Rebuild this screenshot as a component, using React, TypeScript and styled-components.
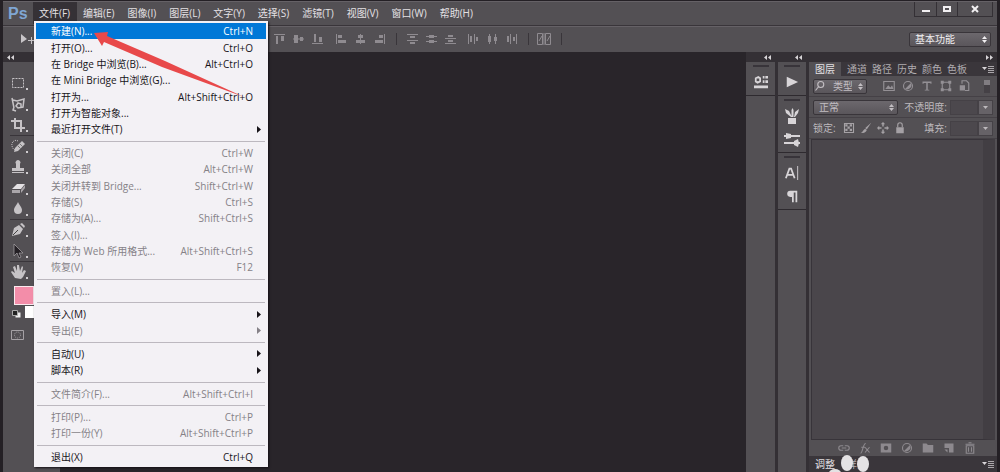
import React from "react";
import styled, { createGlobalStyle, css } from "styled-components";

const C = {
  bar: "#535054",
  line: "#39353a",
  light: "#656166",
  canvas: "#29252a",
  dark: "#3a363b",
  text: "#d8d5d8",
};

const Global = createGlobalStyle`
  * { box-sizing: border-box; }
  body { margin: 0; background: ${C.canvas}; overflow: hidden; }
  body, button, select, input {
    font-family: "Open Sans", "Noto Sans CJK SC", sans-serif;
    font-size: 10px;
    line-height: 14px;
  }
  button { border: 0; padding: 0; background: none; color: inherit; text-align: left; }
  svg { display: block; flex: none; }
`;

const Frame = styled.div`
  position: relative;
  display: flex;
  flex-direction: column;
  height: 100vh;
  border: solid #242025;
  border-width: 1px 3px 0;
  color: ${C.text};
`;

const MenuBar = styled.header`
  display: flex;
  align-items: center;
  height: 24px;
  flex: none;
  background: ${C.bar};
  border-top: 1px solid ${C.light};
`;

const Logo = styled.span`
  width: 30px;
  padding-left: 5px;
  font: 700 16px/22px "Liberation Sans", sans-serif;
  color: #7fa6d3;
`;

const Menus = styled.nav`
  display: flex;
  flex: 1;
  align-self: flex-start;
`;

const MenuTitle = styled.button<{ $open?: boolean }>`
  height: 22px;
  padding: 0 7px 0 6px;
  white-space: nowrap;
  background: ${(p) => (p.$open ? "#353136" : "transparent")};
  color: #e4e1e4;
`;

const WindowButtons = styled.div`
  display: flex;
  align-self: flex-start;
  height: 15px;
  margin-right: 4px;
  border: 1px solid #343035;
  border-top: 0;
`;

const WindowButton = styled.button<{ $wide?: boolean }>`
  display: grid;
  place-items: center;
  width: ${(p) => (p.$wide ? 35 : 21)}px;
  color: #f2f0f2;
  & + & { border-left: 1px solid #343035; }
`;

const OptionsBar = styled.div`
  display: flex;
  align-items: center;
  height: 27px;
  flex: none;
  padding: 0 6px 0 16px;
  background: ${C.bar};
  border-top: 1px solid ${C.line};
  box-shadow: inset 0 1px ${C.light};
`;

const AlignTools = styled.div`
  display: flex;
  flex: 1;
  padding-left: 239px;
`;

const AlignGroup = styled.div<{ $gap?: number; $line?: boolean }>`
  display: flex;
  gap: 7px;
  margin-right: ${(p) => p.$gap ?? 0}px;
  padding-right: 10px;
  border-right: 1px solid ${(p) => (p.$line ? C.line : "transparent")};
`;

const Choice = styled.span<{ $width: number; $bright?: boolean }>`
  display: flex;
  align-items: center;
  width: ${(p) => p.$width}px;
  height: 15px;
  border: 1px solid ${C.line};
  border-radius: 2px;
  background: linear-gradient(#6c686d, #5a565b);
  color: ${(p) => (p.$bright ? "#f2f0f2" : "#c2bec2")};
  select {
    appearance: none;
    flex: 1;
    min-width: 0;
    height: 13px;
    padding: 0 5px;
    border: 0;
    background: none;
    color: inherit;
    line-height: 13px;
  }
  svg { margin-right: 2px; pointer-events: none; }
`;

const Workspace = styled.main`
  display: flex;
  flex: 1;
  min-height: 0;
`;

const ToolColumn = styled.aside`
  display: flex;
  flex-direction: column;
  width: 57px;
  flex: none;
  background: ${C.bar};
`;

const Strip = styled.div<{ $end?: boolean }>`
  display: flex;
  align-items: center;
  justify-content: ${(p) => (p.$end ? "flex-end" : "flex-start")};
  height: 10px;
  flex: none;
  padding: 0 4px;
  background: #343035;
`;

const Tools = styled.div`
  display: flex;
  flex-direction: column;
  padding: 10px 0 0 7px;
`;

const Tool = styled.button<{ $rule?: boolean }>`
  display: flex;
  width: 24px;
  height: 21px;
  align-items: center;
  color: #c6c3c6;
  border-top: 1px solid ${(p) => (p.$rule ? C.line : "transparent")};
`;

const Swatches = styled.div`
  display: flex;
  flex-wrap: wrap;
  justify-content: flex-end;
  gap: 1px;
  width: 31px;
  padding-top: 4px;
`;

const Foreground = styled.button`
  width: 20px;
  height: 19px;
  border: 1px solid #fbe9ee;
  background: #f38da9;
`;

const Background = styled.button`
  width: 9px;
  height: 12px;
  background: #fff;
`;

const ResetColors = styled.button`
  margin-right: 2px;
`;

const QuickMask = styled.button`
  margin: 10px 0 0 8px;
`;

const Document = styled.section`
  flex: 1;
  background: ${C.canvas};
`;

const Dock = styled.aside<{ $width: number }>`
  display: flex;
  flex-direction: column;
  width: ${(p) => p.$width}px;
  flex: none;
  background: ${C.bar};
  border-right: 3px solid #343035;
`;

const DockGroup = styled.div`
  display: flex;
  flex-direction: column;
  align-items: center;
  gap: 6px;
  padding: 3px 0 5px;
  border-bottom: 1px solid #2e2a2f;
  color: #d8d5d8;
`;

const Grip = styled.i`
  width: 16px;
  height: 2px;
  background: #38343a;
`;

const DockButton = styled.button`
  display: grid;
  place-items: center;
  width: 20px;
  height: 17px;
`;

const Panels = styled.aside`
  display: flex;
  flex-direction: column;
  width: 188px;
  flex: none;
  background: ${C.bar};
`;

const Tabs = styled.div<{ $collapsed?: boolean }>`
  display: flex;
  align-items: center;
  height: ${(p) => (p.$collapsed ? 16 : 14)}px;
  flex: none;
  padding-right: 2px;
  background: ${C.dark};
`;

const Tab = styled.button<{ $active?: boolean; $flat?: boolean }>`
  height: 14px;
  line-height: 13px;
  padding: 0 ${(p) => (p.$active ? 6 : 3)}px;
  margin-right: ${(p) => (p.$active ? 3 : -1)}px;
  color: ${(p) => (p.$active ? "#e4e1e4" : "#b0acb0")};
  background: ${(p) => (p.$active && !p.$flat ? C.bar : "transparent")};
`;

const PanelMenu = styled.button`
  margin-left: auto;
  color: #aaa6aa;
`;

const PanelRow = styled.div`
  display: flex;
  align-items: center;
  height: 21px;
  flex: none;
  padding: 0 4px;
  color: #bdb9bd;
  border-bottom: 1px solid #454146;
`;

const Filters = styled.div`
  display: flex;
  flex: 1;
  gap: 7px;
  padding: 0 3px 0 16px;
  color: #949095;
`;

const FilterSwitch = styled.button`
  width: 6px;
  height: 13px;
  margin-left: auto;
  border-top: 5px solid #817d82;
  background: #454146;
`;

const Locks = styled.div`
  display: flex;
  gap: 5px;
  margin-left: 7px;
  color: #a5a1a5;
`;

const NumberField = styled.label`
  display: flex;
  align-items: center;
  gap: 3px;
  margin-left: auto;
  white-space: nowrap;
  input {
    width: 28px;
    height: 15px;
    padding: 0 2px;
    border: 1px solid #454146;
    background: #4c484d;
    color: inherit;
  }
  button {
    display: grid;
    place-items: center;
    width: 15px;
    height: 15px;
    margin-left: -3px;
    background: #666267;
    border: 1px solid #454146;
  }
`;

const LayerList = styled.div`
  flex: 1;
  min-height: 0;
  margin: 0 2px;
  border: 1px solid #38343a;
  border-right: 12px solid #423e43;
  background: #4a464b;
`;

const LayerActions = styled.div`
  display: flex;
  align-items: center;
  gap: 9px;
  height: 16px;
  flex: none;
  padding-left: 29px;
  color: #8d898e;
`;

const Menu = styled.ul`
  position: absolute;
  top: 20px;
  left: 31px;
  display: flex;
  flex-direction: column;
  width: 234px;
  height: 446px;
  margin: 0;
  padding: 2px;
  list-style: none;
  background: #f3f1f5;
  box-shadow: 1px 1px 2px #141015;
`;

const MenuItem = styled.li`
  display: flex;
  flex: 1 1 16px;
  min-height: 0;
`;

const MenuAction = styled.button<{ $selected?: boolean }>`
  display: flex;
  flex: 1;
  align-items: center;
  justify-content: space-between;
  padding: 0 13px 0 15px;
  color: #171419;
  white-space: nowrap;
  &:disabled { color: #858187; }
  ${(p) => p.$selected && css`background: #0078d7; color: #fff;`}
`;

const Submenu = styled.svg`
  margin-right: -8px;
`;

const Rule = styled.li`
  height: 7px;
  flex: none;
  padding: 3px 1px;
  &::after { content: ""; display: block; height: 1px; background: #bcb8bf; }
`;

const Pointer = styled.svg`
  position: absolute;
  top: 30px;
  left: 90px;
  pointer-events: none;
`;

const Paw = styled.svg`
  position: absolute;
  right: 122px;
  bottom: 0;
`;

const Updown = () => (
  <svg width="7" height="9" viewBox="0 0 7 9" fill="currentColor">
    <path d="M3.5 1 6 4H1zM3.5 8 1 5h5z" />
  </svg>
);

const Chevrons = ({ right }: { right?: boolean }) => (
  <svg width="7" height="5" viewBox="0 0 7 5" fill="#d8d5d8">
    <path d={right ? "M0 0 3 2.5 0 5zM4 0 7 2.5 4 5z" : "M3 0 0 2.5 3 5zM7 0 4 2.5 7 5z"} />
  </svg>
);

const MenuLines = () => (
  <svg width="13" height="8" viewBox="0 0 13 8" fill="currentColor">
    <path d="M0 2h5L2.5 5z" fill="#d8d5d8" />
    <path d="M6 1h6v1H6zM6 3h6v1H6zM6 5h6v1H6zM6 7h6v1H6z" />
  </svg>
);

const alignPaths: Record<string, string> = {
  top: "M0 0h11v1H0zM2 2h2v8H2zM7 2h3v5H7z",
  middle: "M0 4.5h11v1H0zM1 1h4v8H1zM7 3h3v4H7z",
  bottom: "M0 9h11v1H0zM2 0h2v8H2zM7 3h3v5H7z",
  left: "M0 0h1v10H0zM2 1h4v3H2zM2 6h8v3H2z",
  center: "M5 0h1v10H5zM3 1h5v3H3zM1 6h9v3H1z",
  right: "M10 0h1v10h-1zM5 1h4v3H5zM1 6h8v3H1z",
  distTop: "M0 0h11v1H0zM3 2h5v2H3zM0 6h11v1H0zM3 8h5v2H3z",
  distMid: "M0 2h11v1H0zM3 1h5v3H3zM0 7h11v1H0zM3 6h5v3H3z",
  distBot: "M0 4h11v1H0zM3 1h5v2H3zM0 9h11v1H0zM3 6h5v2H3z",
  distLeft: "M0 0h1v10H0zM2 2h2v6H2zM6 0h1v10H6zM8 3h2v4H8z",
  distCen: "M2 0h1v10H2zM1 2h3v6H1zM8 0h1v10H8zM7 3h3v4H7z",
  distRight: "M4 0h1v10H4zM1 2h2v6H1zM10 0h1v10h-1zM7 3h2v4H7z",
};

const Align = ({ kind }: { kind: string }) => (
  <button aria-label={kind}>
    <svg width="12" height="10" viewBox="0 0 12 10" fill="#8f8b90">
      <path d={alignPaths[kind]} />
    </svg>
  </button>
);

const toolShapes: [string, React.ReactNode, boolean?][] = [
  ["选框", <path key="a" d="M2.5 3.5h11v9h-11z" fill="none" stroke="currentColor" strokeDasharray="2 1" />],
  ["套索", <path key="a" d="M2 2l2 10M3 4l4 1 7-2-1 8-5 1-2-2 2-3 3 1v4M4 11l-1 3 3 1" fill="none" stroke="currentColor" strokeWidth="1.5" />],
  ["裁剪", <path key="a" d="M5 1v10h10M1 4h10v11" fill="none" stroke="currentColor" strokeWidth="2" />],
  ["修复", <g key="a"><path d="M5 10 12 3l3 3-7 7-4 1z" fill="currentColor" /><path d="M8 3C5 1 1 4 2 8s3 4 4 3" fill="none" stroke="currentColor" strokeDasharray="1 1" /><path d="M8 8l3 3M10 6l3 3" stroke="#777" /></g>, true],
  ["图章", <path key="a" d="M6 7V5a2.500 2.500 0 1 1 4 0v4h4v3H2V9h4zM2 13h12v1H2z" fill="currentColor" />],
  ["橡皮擦", <g key="a"><path d="M2 9 7 4h8l-4 5z" fill="#e4e1e4" /><path d="M2 10h8v3H2zM11 10l4-5v3l-4 5z" fill="#aaa6aa" /></g>],
  ["模糊", <path key="a" d="M8 1c1 3 4 5 4 8a4 4 0 0 1-8 0c0-3 3-5 4-8z" fill="currentColor" />],
  ["钢笔", <g key="a"><path d="m2 14 2-8 5-3 4 4-3 5zM10 2l2-1 3 3-1 2z" fill="currentColor" /><path d="m3 13 5-5" stroke="#444" /></g>, true],
  ["选择", <path key="a" d="M4 1v12l3-3 2 5 2-1-2-4h4z" fill="#242025" stroke="#aaa6aa" strokeWidth=".7" />],
  ["抓手", <path key="a" d="M5 14 1 8l1-1 3 2-2-6 2-1 2 5V1h2l1 6 2-5 1 1-1 6 2-3 2 1-3 6-2 2z" fill="currentColor" />, true],
];

type Entry = { label: string; keys?: string; off?: boolean; sub?: boolean; selected?: boolean } | null;

const fileMenu: Entry[] = [
  { label: "新建(N)...", keys: "Ctrl+N", selected: true },
  { label: "打开(O)...", keys: "Ctrl+O" },
  { label: "在 Bridge 中浏览(B)...", keys: "Alt+Ctrl+O" },
  { label: "在 Mini Bridge 中浏览(G)..." },
  { label: "打开为...", keys: "Alt+Shift+Ctrl+O" },
  { label: "打开为智能对象..." },
  { label: "最近打开文件(T)", sub: true },
  null,
  { label: "关闭(C)", keys: "Ctrl+W", off: true },
  { label: "关闭全部", keys: "Alt+Ctrl+W", off: true },
  { label: "关闭并转到 Bridge...", keys: "Shift+Ctrl+W", off: true },
  { label: "存储(S)", keys: "Ctrl+S", off: true },
  { label: "存储为(A)...", keys: "Shift+Ctrl+S", off: true },
  { label: "签入(I)...", off: true },
  { label: "存储为 Web 所用格式...", keys: "Alt+Shift+Ctrl+S", off: true },
  { label: "恢复(V)", keys: "F12", off: true },
  null,
  { label: "置入(L)...", off: true },
  null,
  { label: "导入(M)", sub: true },
  { label: "导出(E)", sub: true, off: true },
  null,
  { label: "自动(U)", sub: true },
  { label: "脚本(R)", sub: true },
  null,
  { label: "文件简介(F)...", keys: "Alt+Shift+Ctrl+I", off: true },
  null,
  { label: "打印(P)...", keys: "Ctrl+P", off: true },
  { label: "打印一份(Y)", keys: "Alt+Shift+Ctrl+P", off: true },
  null,
  { label: "退出(X)", keys: "Ctrl+Q" },
];

const titles = ["文件(F)", "编辑(E)", "图像(I)", "图层(L)", "文字(Y)", "选择(S)", "滤镜(T)", "视图(V)", "窗口(W)", "帮助(H)"];

const Icon = ({ children, size = 12 }: { children: React.ReactNode; size?: number }) => (
  <svg width={size} height={size} viewBox="0 0 16 16" fill="currentColor">{children}</svg>
);

const ring = { fill: "none", stroke: "currentColor", strokeWidth: 1.5 };

const pictureIcon = <g><path d="M1 2h14v12H1z" {...ring} /><path d="m3 12 4-5 3 3 2-3 2 5z" /></g>;
const adjustIcon = <g><circle cx="8" cy="8" r="6" {...ring} /><path d="M12 4a6 6 0 0 1-8 8z" /></g>;

const DownArrow = () => (
  <svg width="5" height="3" fill="currentColor"><path d="M0 0h5L2.5 3z" /></svg>
);

export default function App() {
  return (
    <Frame>
      <Global />
      <MenuBar>
        <Logo>Ps</Logo>
        <Menus>
          {titles.map((t, i) => <MenuTitle key={t} $open={i === 0}>{t}</MenuTitle>)}
        </Menus>
        <WindowButtons>
          <WindowButton aria-label="最小化"><svg width="8" height="8"><path d="M0 5h8v2H0z" fill="currentColor" /></svg></WindowButton>
          <WindowButton aria-label="最大化"><svg width="8" height="8"><path d="M1 2h6v4H1z" fill="none" stroke="currentColor" strokeWidth="2" /></svg></WindowButton>
          <WindowButton $wide aria-label="关闭"><svg width="8" height="8"><path d="m1 1 6 6M7 1 1 7" stroke="currentColor" strokeWidth="2" /></svg></WindowButton>
        </WindowButtons>
      </MenuBar>

      <OptionsBar>
        <svg width="16" height="14" fill="#c8c5c8"><path d="M2 2v9l6-4zM9 8h7v1H9zM12 5h1v7h-1z" /></svg>
        <AlignTools>
          <AlignGroup $gap={1}><Align kind="top" /><Align kind="middle" /><Align kind="bottom" /></AlignGroup>
          <AlignGroup $line $gap={10}><Align kind="left" /><Align kind="center" /><Align kind="right" /></AlignGroup>
          <AlignGroup><Align kind="distTop" /><Align kind="distMid" /><Align kind="distBot" /></AlignGroup>
          <AlignGroup $line $gap={8}><Align kind="distLeft" /><Align kind="distCen" /><Align kind="distRight" /></AlignGroup>
          <AlignGroup $line>
            <button aria-label="自动对齐"><svg width="14" height="12" fill="none" stroke="#8f8b90"><path d="M.5.5h5v11h-5zM8.5.5h5v11h-5zM2 8l3-5M10 8l3-5M7 0v12" /></svg></button>
          </AlignGroup>
        </AlignTools>
        <Choice $width={82} $bright>
          <select aria-label="工作区"><option>基本功能</option></select>
          <Updown />
        </Choice>
      </OptionsBar>

      <Workspace>
        <ToolColumn>
          <Strip><Chevrons /></Strip>
          <Tools>
            {toolShapes.map(([name, shape, rule]) => (
              <Tool key={name} aria-label={name} $rule={rule}>
                <Icon size={16}>{shape}</Icon>
                <svg width="3" height="14" fill="#d0cdd0"><path d="M0 12h2v2H0z" /></svg>
              </Tool>
            ))}
          </Tools>
          <Swatches>
            <Foreground aria-label="前景色" />
            <ResetColors aria-label="默认颜色">
              <svg width="10" height="14"><path d="M3.5 6.5h5v5h-5z" fill="#eee" /><path d="M.5 4.5h5v5h-5z" fill="#222" stroke="#aaa" /></svg>
            </ResetColors>
            <Background aria-label="背景色" />
          </Swatches>
          <QuickMask aria-label="快速蒙版">
            <svg width="14" height="10" fill="none" stroke="#a5a1a5"><path d="M.5.5h12v9H.5z" /><circle cx="6.500" cy="5" r="3" strokeDasharray="1 1" /></svg>
          </QuickMask>
        </ToolColumn>

        <Document />

        <Dock $width={32}>
          <Strip $end><Chevrons /></Strip>
          <DockGroup>
            <Grip />
            <DockButton aria-label="Mini Bridge"><Icon size={14}><path d="M1 3l4-2 3 2v5l-4 2-3-2z" /><path d="M3 4h3v3H3z" fill="#535054" /><path d="M10 1h2v3h-2zM13 1h3v3h-3zM10 6h2v3h-2zM13 6h3v3h-3zM0 12h16v3H0z" /></Icon></DockButton>
          </DockGroup>
        </Dock>

        <Dock $width={31}>
          <Strip $end><Chevrons /></Strip>
          <DockGroup>
            <Grip />
            <DockButton aria-label="动作"><Icon size={14}><path d="M2 2v12l13-6z" /></Icon></DockButton>
          </DockGroup>
          <DockGroup>
            <Grip />
            <DockButton aria-label="画笔预设"><Icon size={16}><path d="M4 10h8v6H4zM7 9 2 5 1 1l4 2 3 6zM7.500 9V2l1-2 1 2v7zM10 9l1-5 4-3-1 4-3 4z" /></Icon></DockButton>
            <DockButton aria-label="画笔"><Icon size={16}><path d="M0 4h16v2H0zM2 2l5 1v4L2 8zM0 11h16v2H0zM10 10l4-2 1 4-1 4-4-2z" /></Icon></DockButton>
          </DockGroup>
          <DockGroup>
            <Grip />
            <DockButton aria-label="字符"><Icon size={14}><path d="m1 14 4-11h2l4 11M3 10h6" fill="none" stroke="currentColor" strokeWidth="2" /><path d="M14 0h1v16h-1z" /></Icon></DockButton>
            <DockButton aria-label="段落"><Icon size={14}><path d="M7 2h7v13h-2V4h-2v11H8V9H6a3.500 3.500 0 0 1 0-7z" /></Icon></DockButton>
          </DockGroup>
        </Dock>

        <Panels>
          <Strip $end><Chevrons right /></Strip>
          <Tabs>
            <Tab $active>图层</Tab><Tab>通道</Tab><Tab>路径</Tab><Tab>历史</Tab><Tab>颜色</Tab><Tab>色板</Tab>
            <PanelMenu aria-label="面板菜单"><MenuLines /></PanelMenu>
          </Tabs>
          <PanelRow>
            <Choice $width={54}>
              <Icon><circle cx="9" cy="6" r="4" {...ring} /><path d="m6 9-4 5" {...ring} /></Icon>
              <select aria-label="过滤类型"><option>类型</option></select>
              <Updown />
            </Choice>
            <Filters>
              <Icon>{pictureIcon}</Icon>
              <Icon>{adjustIcon}</Icon>
              <Icon><path d="M2 2h12v3h-1l-1-1H9v9h2v1H5v-1h2V4H4L3 5H2z" /></Icon>
              <Icon><path d="M3 3h10v10H3z" {...ring} /><path d="M1 1h4v4H1zM11 1h4v4h-4zM1 11h4v4H1zM11 11h4v4h-4z" /></Icon>
              <Icon><path d="M4 5V1h6l3 3v10H8" {...ring} /><path d="M1 7h7v7H1z" /></Icon>
              <FilterSwitch aria-label="过滤开关" />
            </Filters>
          </PanelRow>
          <PanelRow>
            <Choice $width={85}>
              <select aria-label="混合模式"><option>正常</option></select>
              <Updown />
            </Choice>
            <NumberField>不透明度: <input /><button aria-label="不透明度选项"><DownArrow /></button></NumberField>
          </PanelRow>
          <PanelRow>
            锁定:
            <Locks>
              <Icon><path d="M2 2h12v12H2z" {...ring} /><path d="M3 3h3v3H3zM9 3h3v3H9zM6 6h3v3H6zM3 9h3v3H3zM9 9h3v3H9z" /></Icon>
              <Icon><path d="m15 1-6 9-2-2zM7 9l2 2c-2 4-5 4-8 3 3 0 3-4 6-5z" /></Icon>
              <Icon><path d="M8 0l3 3H9v3H7V3H5zM8 16l3-3H9v-3H7v3H5zM0 8l3-3v2h3v2H3v2zM16 8l-3-3v2h-3v2h3v2z" /></Icon>
              <Icon><path d="M3 7h10v8H3z" /><path d="M5 7V4a3 3 0 0 1 6 0v3" {...ring} /></Icon>
            </Locks>
            <NumberField>填充: <input /><button aria-label="填充选项"><DownArrow /></button></NumberField>
          </PanelRow>
          <LayerList />
          <LayerActions>
            <Icon><path d="M7 11H4a3 3 0 0 1 0-6h3M9 5h3a3 3 0 0 1 0 6H9M5 8h6" {...ring} /></Icon>
            <Icon><path d="M2 15c3 0 3-13 7-13M3 7h5M8 7l6 7M14 7l-6 7" {...ring} /></Icon>
            <Icon><path d="M1 2h14v12H1zM8 5a3 3 0 1 0 0 6 3 3 0 0 0 0-6z" fillRule="evenodd" /></Icon>
            <Icon>{adjustIcon}</Icon>
            <Icon><path d="M1 2h5l2 2h7v10H1z" /></Icon>
            <Icon><path d="M2 2h12v12H8V8H2z" /><path d="M2 10h4v4z" /></Icon>
            <Icon><path d="M3 5h10v10H3zM2 3h12M6 1h4M6 7v6M10 7v6" {...ring} /></Icon>
          </LayerActions>
          <Tabs $collapsed>
            <Tab $active $flat>调整</Tab><Tab>样式</Tab>
            <PanelMenu aria-label="调整面板菜单"><MenuLines /></PanelMenu>
          </Tabs>
        </Panels>
      </Workspace>

      <Paw width="50" height="18" viewBox="0 0 50 18" fill="#e4e2e4">
        <ellipse cx="22" cy="9" rx="6" ry="8" /><ellipse cx="38" cy="10" rx="6" ry="8" /><ellipse cx="10" cy="19" rx="6" ry="4" />
      </Paw>

      <Menu>
        {fileMenu.map((m, i) =>
          m ? (
            <MenuItem key={i}>
              <MenuAction disabled={m.off} $selected={m.selected}>
                <span>{m.label}</span>
                {m.keys && <span>{m.keys}</span>}
                {m.sub && <Submenu width="4" height="7" fill="currentColor"><path d="M0 0 4 3.500 0 7z" /></Submenu>}
              </MenuAction>
            </MenuItem>
          ) : <Rule key={i} />
        )}
      </Menu>

      <Pointer width="156" height="70" viewBox="0 0 156 70">
        <path d="M1 2 15 1 14 5 72 30 151 66 69 36 11 11 9 15z" fill="#e8494a" />
      </Pointer>
    </Frame>
  );
}
